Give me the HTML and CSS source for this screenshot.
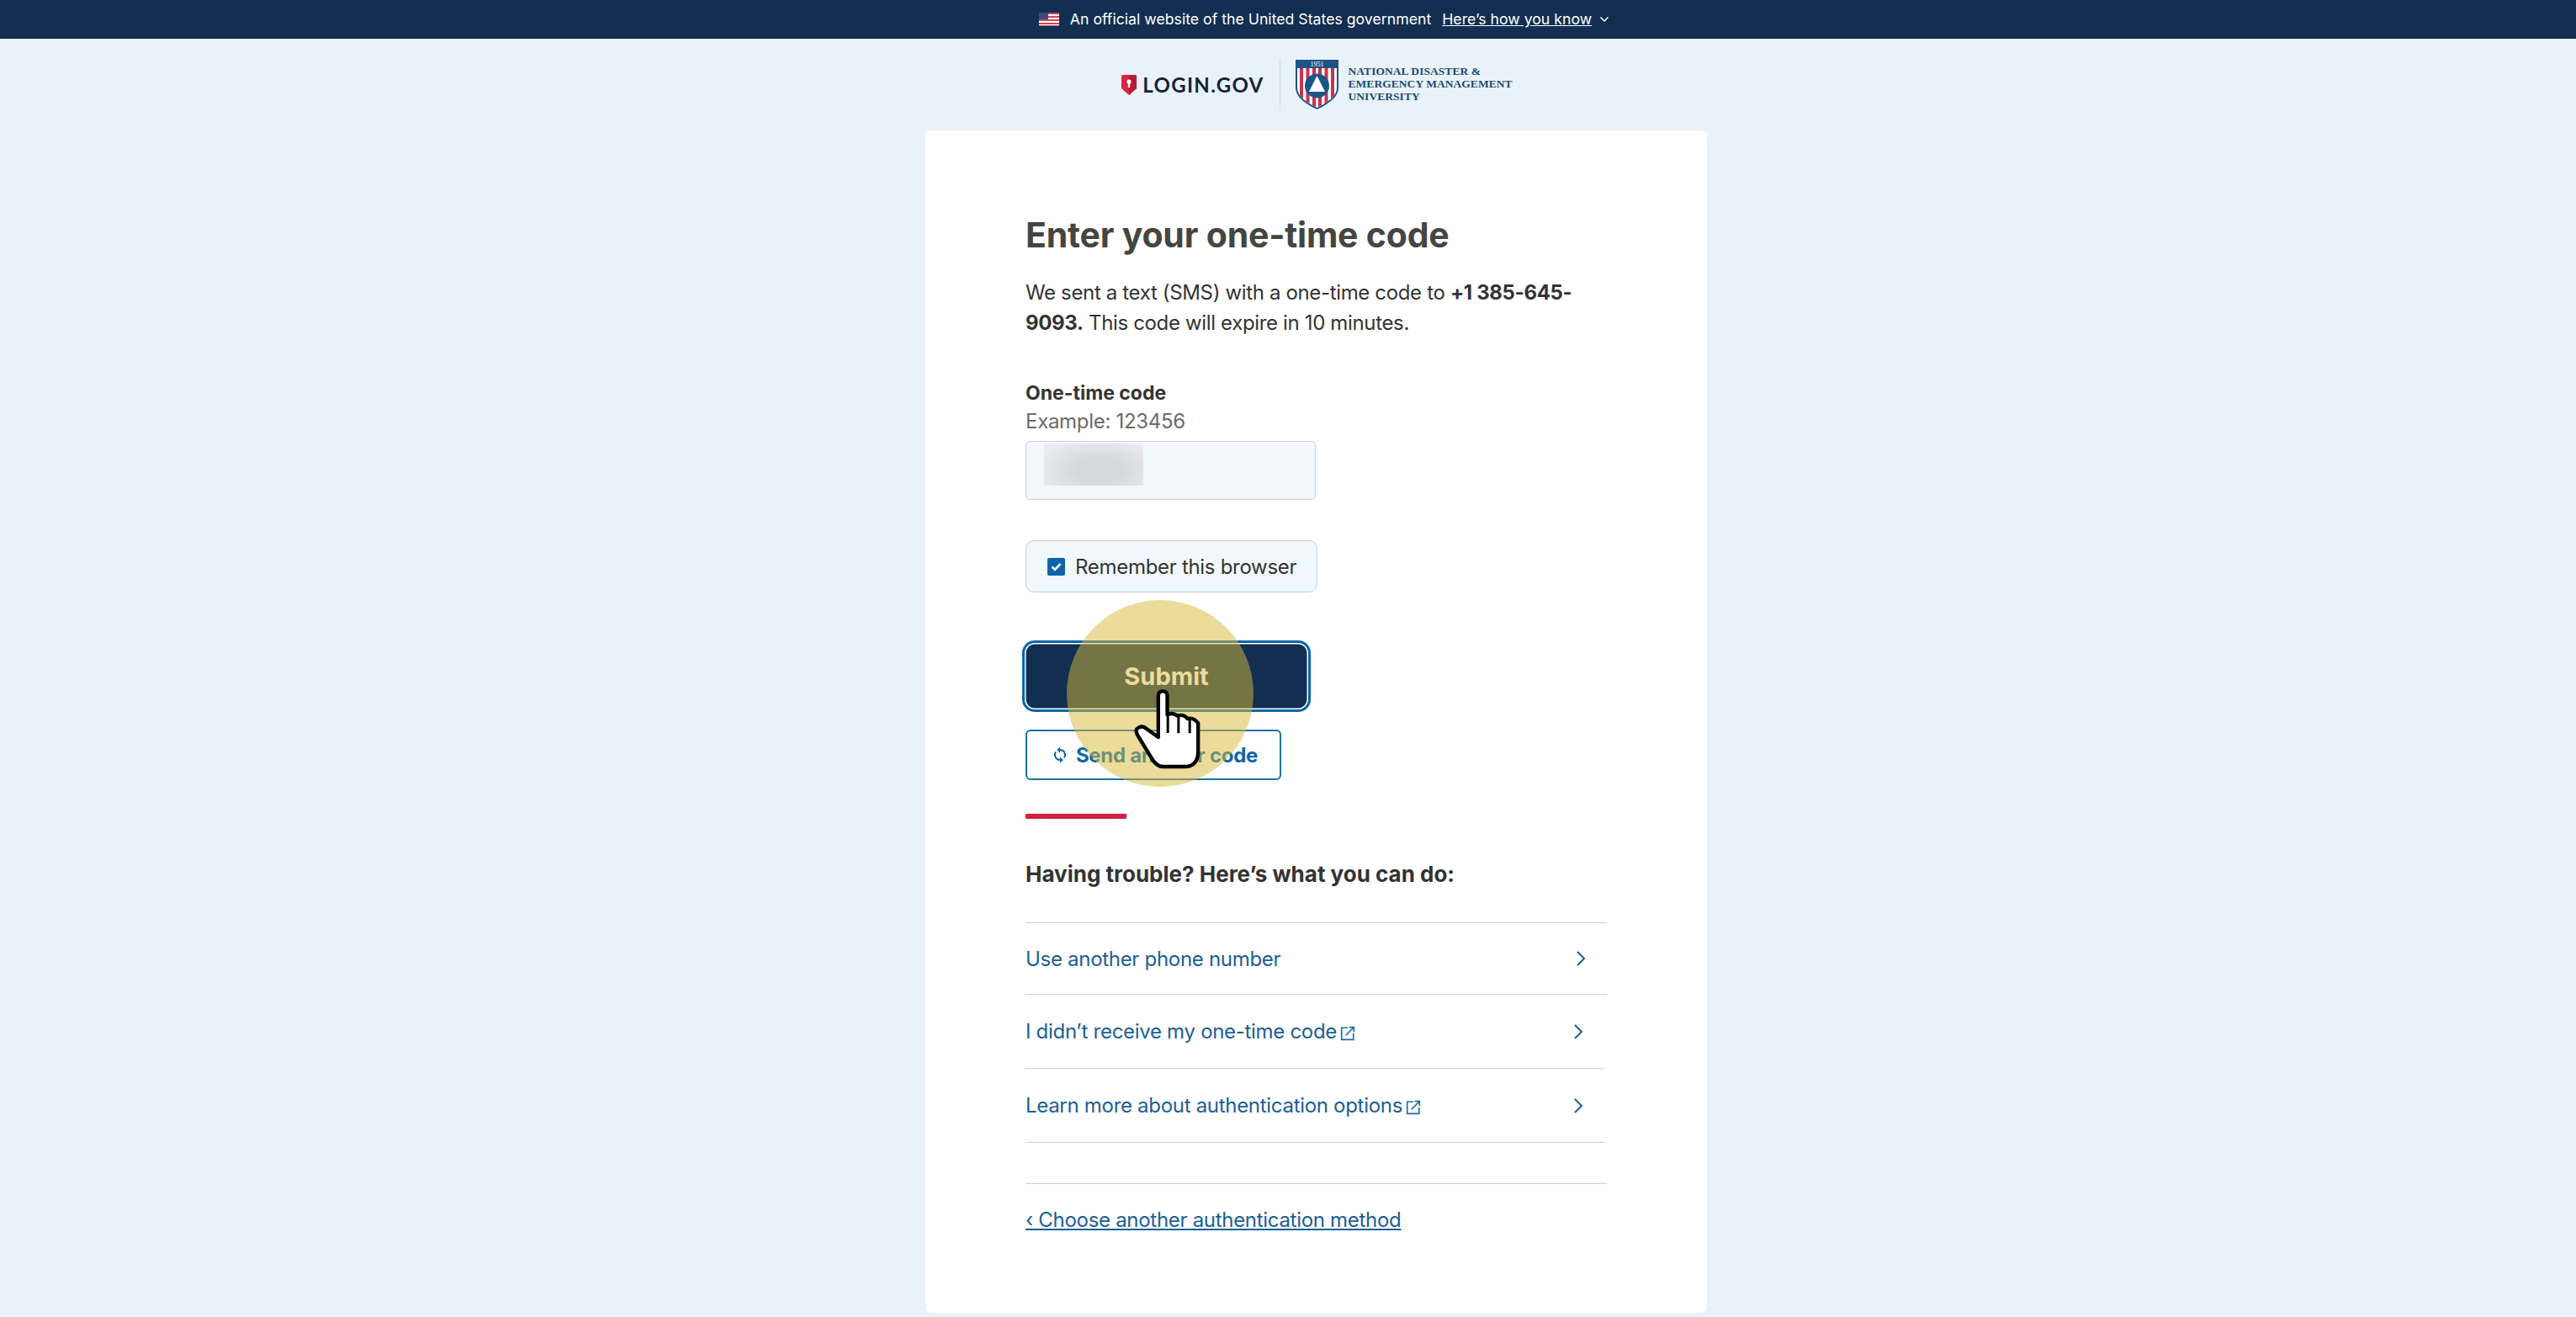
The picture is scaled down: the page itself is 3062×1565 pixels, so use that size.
FILE: index.html
```html
<!DOCTYPE html>
<html lang="en">
<head>
    <meta charset="UTF-8">
    <meta name="viewport" content="width=device-width, initial-scale=1.0">
    <title>Enter your one-time code</title>
    <link rel="stylesheet" href="styles.css">
</head>
<body>
    <div class="gov-banner">
        <svg class="flag" viewBox="0 0 24 16">
            <rect width="24" height="16" fill="#fff"/>
            <path d="M0 0h24v2H0zM0 4h24v2H0zM0 8h24v2H0zM0 12h24v2H0z" fill="#c9485b"/>
            <rect y="15" width="24" height="1" fill="#c9485b"/>
            <rect width="11" height="8" fill="#3d4a80"/>
        </svg>
        <span class="gov-text">An official website of the United States government</span>
        <a class="gov-link">Here’s how you know</a>
        <svg class="gov-chevron" viewBox="0 0 12 8"><path d="M1.500 1.500 6 6l4.500-4.500" fill="none" stroke="#fff" stroke-width="1.500"/></svg>
    </div>

    <header class="logos">
        <div class="login-logo">
            <svg class="login-shield" viewBox="0 0 18 24">
                <path d="M2 0h14a2 2 0 0 1 2 2v14l-9 8-9-8V2a2 2 0 0 1 2-2z" fill="#d7263d"/>
                <path d="M9 0h7a2 2 0 0 1 2 2v14l-9 8z" fill="#b51d33"/>
                <circle cx="9" cy="8" r="2.600" fill="#fff"/>
                <rect x="7.800" y="8" width="2.400" height="7" fill="#fff"/>
            </svg>
            <span class="login-word">LOGIN.GOV</span>
        </div>
        <div class="logo-divider"></div>
        <svg class="seal" viewBox="0 0 51 60">
            <clipPath id="seal-field"><path d="M2 10h47v23c0 11-12 18-23.500 24C14 51 2 44 2 33z"/></clipPath>
            <path d="M0 0h51v33c0 12-13 20-25.500 26C13 53 0 45 0 33z" fill="#1b5587"/>
            <path d="M2 10h47v23c0 11-12 18-23.500 24C14 51 2 44 2 33z" fill="#fff"/>
            <g clip-path="url(#seal-field)" fill="#c8324a">
                <rect x="5" y="10" width="4" height="50"/>
                <rect x="12.500" y="10" width="4" height="50"/>
                <rect x="20" y="10" width="4" height="50"/>
                <rect x="27" y="10" width="4" height="50"/>
                <rect x="34.500" y="10" width="4" height="50"/>
                <rect x="42" y="10" width="4" height="50"/>
            </g>
            <circle cx="25.500" cy="31" r="14.500" fill="#1b5587"/>
            <path d="M25.500 19 35 38H16z" fill="#fff"/>
            <text class="seal-year" x="25.500" y="8" text-anchor="middle">1951</text>
        </svg>
        <div class="ndemu-name">NATIONAL DISASTER &amp;<br>EMERGENCY MANAGEMENT<br>UNIVERSITY</div>
    </header>

    <main class="card">
        <h1 class="title">Enter your one-time code</h1>
        <p class="intro">We sent a text (SMS) with a one-time code to <strong>+1 385-645-<br>9093.</strong> This code will expire in 10 minutes.</p>

        <div class="field-label">One-time code</div>
        <div class="field-hint">Example: 123456</div>
        <div class="code-input"><span class="blurred"></span></div>

        <label class="remember">
            <span class="checkbox">
                <svg viewBox="0 0 21 21"><path d="M5.500 10.500 9 14l6.500-7" fill="none" stroke="#fff" stroke-width="2.600"/></svg>
            </span>
            Remember this browser
        </label>

        <div class="actions">
            <button class="submit-btn">Submit</button>
            <button class="resend-btn">
                <svg viewBox="0 0 24 24"><path d="M12 4.500V1.500L8 5.500l4 4V6.500a5.500 5.500 0 0 1 4.700 8.400l1.500 1.500A7.500 7.500 0 0 0 12 4.500zM12 17.500a5.500 5.500 0 0 1-4.700-8.400L5.800 7.600A7.500 7.500 0 0 0 12 19.500v3l4-4-4-4z" fill="#0b64ab"/></svg>
                Send another code
            </button>
            <div class="click-spot"></div>
            <svg class="hand" viewBox="500 310 250 300">
                <path d="M590 490V342q0-16 16-16t16 16v68q20-10 36 4 22-8 36 10 22-6 38 16v100q0 55-50 55h-75q-24 0-42-32l-50-82q-10-18 6-26 14-7 28 6z" fill="#fff" stroke="#000" stroke-width="13" stroke-linejoin="round"/>
                <path d="M624 410v65M662 414v62M702 426v50" fill="none" stroke="#000" stroke-width="9"/>
            </svg>
        </div>

        <div class="accent-bar"></div>

        <h2 class="trouble-title">Having trouble? Here’s what you can do:</h2>
        <ul class="trouble-list">
            <li class="trouble-item">
                <a>Use another phone number</a>
                <svg class="chevron" viewBox="0 0 12 20"><path d="M2 2l8 8-8 8" fill="none" stroke="#1b5f95" stroke-width="2"/></svg>
            </li>
            <li class="trouble-item short">
                <a>I didn’t receive my one-time code<svg class="external" viewBox="0 0 16 16"><path d="M8 2H1.500v12.500H14V8M6 10l8-8M9.500 1.500h5v5" fill="none" stroke="#1b6fa8" stroke-width="1.500"/></svg></a>
                <svg class="chevron" viewBox="0 0 12 20"><path d="M2 2l8 8-8 8" fill="none" stroke="#1b5f95" stroke-width="2"/></svg>
            </li>
            <li class="trouble-item short">
                <a>Learn more about authentication options<svg class="external" viewBox="0 0 16 16"><path d="M8 2H1.500v12.500H14V8M6 10l8-8M9.500 1.500h5v5" fill="none" stroke="#1b6fa8" stroke-width="1.500"/></svg></a>
                <svg class="chevron" viewBox="0 0 12 20"><path d="M2 2l8 8-8 8" fill="none" stroke="#1b5f95" stroke-width="2"/></svg>
            </li>
        </ul>

        <div class="back-row">
            <a class="back-link">‹ Choose another authentication method</a>
        </div>
    </main>
</body>
</html>
```

FILE: styles.css
```css
* {
    margin: 0;
    padding: 0;
    box-sizing: border-box;
    font-family: Inter, 'Liberation Sans', sans-serif;
}

html, body {
    height: 1565px;
    overflow: hidden;
}

body {
    background: #e9f2f9;
    color: #333;
}

.gov-banner {
    height: 46px;
    background: #122e51;
    color: #fff;
    display: flex;
    align-items: center;
    justify-content: center;
    font-size: 17.700px;
    padding-left: 86px;
    border-bottom: 1px solid #0d2340;
}

.flag {
    width: 24px;
    height: 16px;
    margin-right: 13px;
}

.gov-text {
    margin-right: 13px;
}

.gov-link {
    text-decoration: underline;
    margin-right: 9px;
}

.gov-chevron {
    width: 12px;
    height: 8px;
}

.logos {
    height: 109px;
    display: flex;
    align-items: center;
    justify-content: center;
    padding-left: 69px;
}

.login-logo {
    display: flex;
    align-items: center;
}

.login-shield {
    width: 18px;
    height: 24px;
    margin-right: 7px;
}

.login-word {
    font-family: Lato, sans-serif;
    font-weight: 700;
    font-size: 24px;
    letter-spacing: 1.300px;
    color: #14233c;
}

.logo-divider {
    width: 1px;
    height: 60px;
    background: #d3dbe3;
    margin: 0 18px;
}

.seal {
    width: 51px;
    height: 60px;
    margin-right: 12px;
}

.seal-year {
    font-family: 'Liberation Serif', serif;
    font-size: 8px;
    fill: #fff;
}

.ndemu-name {
    font-family: 'Liberation Serif', serif;
    font-weight: 700;
    font-size: 13.500px;
    line-height: 15px;
    letter-spacing: .05px;
    color: #1c4a6e;
    margin-top: -3px;
}

.card {
    width: 929px;
    height: 1405px;
    margin-left: 1100px;
    background: #fff;
    border-radius: 8px;
    padding: 98px 119px 0 119px;
    font-size: 24px;
    letter-spacing: -.3px;
}

.title {
    font-size: 41px;
    line-height: 52px;
    font-weight: 700;
    color: #454540;
    margin-bottom: 25px;
    letter-spacing: -.2px;
}

.intro {
    line-height: 36px;
    margin-bottom: 48px;
    white-space: nowrap;
    letter-spacing: -.35px;
}

.intro strong {
    font-weight: 700;
}

.field-label {
    font-size: 23px;
    font-weight: 700;
    line-height: 34px;
    letter-spacing: 0;
}

.field-hint {
    color: #6b6b6b;
    line-height: 34px;
}

.code-input {
    width: 345px;
    height: 70px;
    margin-top: 6px;
    background: #f1f8fd;
    border: 1px solid #c4d0da;
    border-radius: 5px;
    padding: 2px 0 0 21px;
}

.blurred {
    display: block;
    width: 118px;
    height: 50px;
    background: radial-gradient(ellipse at 55% 65%, #d4d8df 30%, #e9edf2 85%);
}

.remember {
    width: 347px;
    height: 62px;
    margin-top: 48px;
    display: flex;
    align-items: center;
    gap: 12px;
    padding-left: 25px;
    background: #f1f8fd;
    border: 1px solid #c4d0da;
    border-radius: 10px;
}

.checkbox {
    width: 21px;
    height: 21px;
    background: #0b64ab;
    border-radius: 2px;
    display: flex;
}

.actions {
    position: relative;
    margin-top: 57px;
    display: flex;
    flex-direction: column;
    align-items: flex-start;
}

.submit-btn {
    width: 343px;
    height: 85px;
    margin-left: -4px;
    background: #122e51;
    color: #fff;
    font-size: 29px;
    font-weight: 700;
    letter-spacing: 0;
    border: none;
    border-radius: 15px;
    box-shadow: inset 0 0 0 3px #0b64ab, inset 0 0 0 4.500px #fff;
}

.resend-btn {
    width: 304px;
    height: 60px;
    margin-top: 21px;
    background: #fff;
    color: #0b64ab;
    border: 2px solid #1b6fa8;
    border-radius: 6px;
    font-size: 24px;
    font-weight: 700;
    letter-spacing: -.3px;
    display: flex;
    align-items: center;
    justify-content: center;
    gap: 8px;
    padding-left: 2px;
}

.resend-btn svg {
    width: 22px;
    height: 22px;
}

.click-spot {
    position: absolute;
    left: 49px;
    top: -48px;
    width: 222px;
    height: 222px;
    border-radius: 50%;
    background: rgba(216, 186, 58, .5);
}

.hand {
    position: absolute;
    left: 127px;
    top: 55px;
    width: 85px;
    height: 100px;
}

.accent-bar {
    width: 120px;
    height: 6px;
    background: #d41f3f;
    margin-top: 40px;
}

.trouble-title {
    font-size: 26px;
    line-height: 36px;
    font-weight: 700;
    margin-top: 48px;
    letter-spacing: 0;
}

.trouble-list {
    list-style: none;
    margin-top: 39px;
    border-top: 1px solid #c9d3da;
}

.trouble-item {
    height: 85px;
    display: flex;
    align-items: center;
    justify-content: space-between;
    padding-right: 25px;
    border-bottom: 1px solid #c9d3da;
    color: #1b5f95;
}

.trouble-item.short {
    height: 88px;
    margin-right: 3px;
}

.chevron {
    width: 12px;
    height: 20px;
}

.external {
    width: 18px;
    height: 18px;
    margin-left: 4px;
    vertical-align: -3px;
}

.back-row {
    margin-top: 48px;
    border-top: 1px solid #c9d3da;
    padding-top: 25px;
}

.back-link {
    line-height: 36px;
    color: #1b5f95;
    text-decoration: underline;
}
```
